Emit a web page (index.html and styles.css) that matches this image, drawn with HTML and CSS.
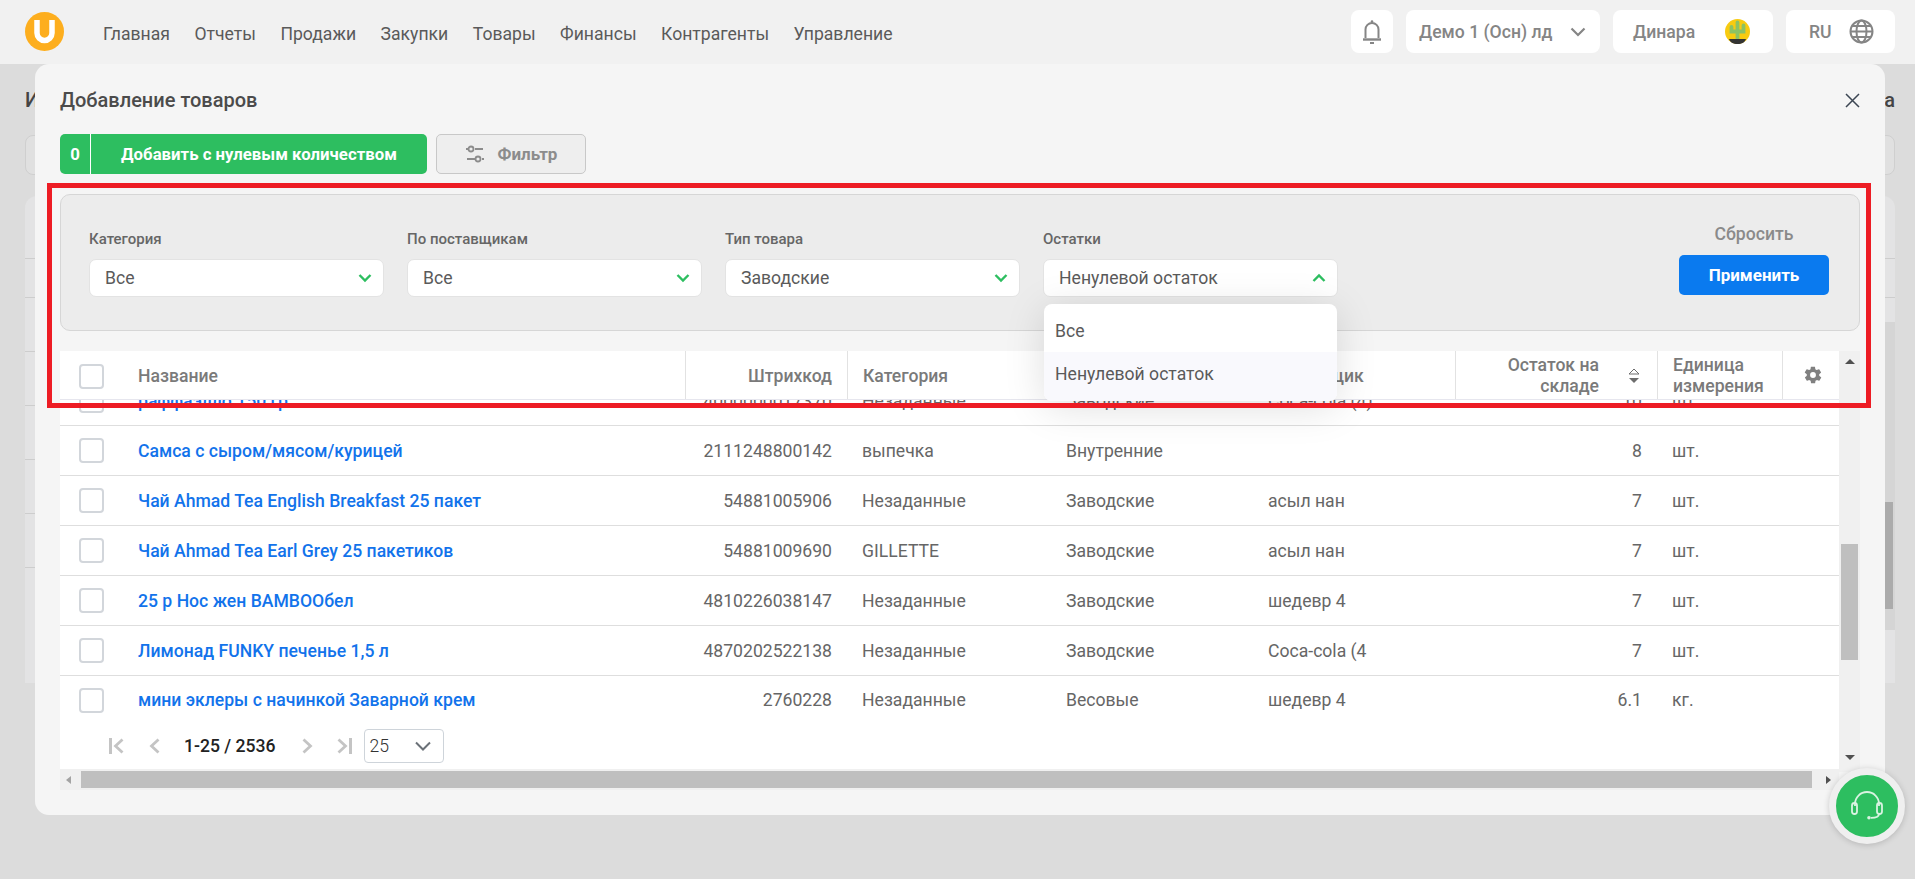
FILE: index.html
```html
<!DOCTYPE html>
<html lang="ru">
<head>
<meta charset="utf-8">
<title>Добавление товаров</title>
<link rel="stylesheet" href="styles.css">
</head>
<body>
<header class="topbar">
  <svg class="logo" viewBox="0 0 39 39"><circle cx="19.5" cy="19.5" r="19.5" fill="#fdae1e"/><path d="M12 8v13a7.500 7.500 0 0 0 15 0V8" fill="none" stroke="#fff" stroke-width="5.500"/></svg>
  <nav class="nav"><span>Главная</span><span>Отчеты</span><span>Продажи</span><span>Закупки</span><span>Товары</span><span>Финансы</span><span>Контрагенты</span><span>Управление</span></nav>
  <div class="widgets">
    <div class="widget bell"><svg width="20" height="26" viewBox="0 0 20 26" fill="none" stroke="#858585" stroke-width="2"><path d="M3.500 19V10.500a6.500 6.500 0 0 1 13 0V19"/><path d="M1 20.500h18" stroke-width="2.400"/><circle cx="10" cy="2.500" r="1.300" fill="#858585" stroke="none"/><path d="M8 24h4" stroke-width="2"/></svg></div>
    <div class="widget demo"><span>Демо 1 (Осн) лд</span><svg width="16" height="10" viewBox="0 0 16 10" fill="none" stroke="#858585" stroke-width="2.200"><path d="M1.500 1.500L8 8l6.500-6.500"/></svg></div>
    <div class="widget user"><span>Динара</span><svg width="25" height="25" viewBox="0 0 25 25"><circle cx="12.500" cy="12.500" r="12.500" fill="#f8cb10"/><path d="M12.500 3.500v16M6.500 8v4.500h5M18.500 6.500v6h-5" fill="none" stroke="#8dc263" stroke-width="3.800" stroke-linecap="round"/><path d="M4 20h17c-.8 3-4 5-8.500 5S4.800 23 4 20z" fill="#333"/></svg></div>
    <div class="widget lang"><span>RU</span><svg width="25" height="25" viewBox="0 0 25 25" fill="none" stroke="#858585" stroke-width="2"><circle cx="12.500" cy="12.500" r="11"/><ellipse cx="12.500" cy="12.500" rx="5" ry="11"/><path d="M1.500 12.500h22M3 7h19M3 18h19"/></svg></div>
  </div>
</header>

<main class="backdrop">
  <h1 class="back-title"><span>И</span><span>а</span></h1>
  <div class="back-filter"></div>
  <div class="back-card">
    <div class="back-line"></div><div class="back-line"></div><div class="back-line"></div><div class="back-line"></div><div class="back-line"></div><div class="back-line"></div><div class="back-line"></div>
  </div>
  <div class="back-scroll"><i class="back-thumb"></i></div>
</main>

<section class="modal">
  <div class="modal-head">
    <h2>Добавление товаров</h2>
    <svg class="close" width="15" height="15" viewBox="0 0 15 15" stroke="#3c4653" stroke-width="1.500"><path d="M1 1l13 13M14 1L1 14"/></svg>
  </div>
  <div class="actions">
    <button class="add"><span class="add-count">0</span><span class="add-label">Добавить с нулевым количеством</span></button>
    <button class="filter-btn"><svg width="20" height="20" viewBox="0 0 20 20" fill="none" stroke="#8c8c8c" stroke-width="1.800"><circle cx="6" cy="5" r="2.500"/><path d="M10 5h8M1 5h2"/><circle cx="13" cy="15" r="2.500"/><path d="M2 15h8M17 15h2"/></svg><span>Фильтр</span></button>
  </div>
  <div class="filters">
    <div class="field"><label>Категория</label><div class="select"><span>Все</span><svg class="chev" viewBox="0 0 14 10"><path d="M1.500 2L7 7.500 12.500 2"/></svg></div></div>
    <div class="field"><label>По поставщикам</label><div class="select"><span>Все</span><svg class="chev" viewBox="0 0 14 10"><path d="M1.500 2L7 7.500 12.500 2"/></svg></div></div>
    <div class="field"><label>Тип товара</label><div class="select"><span>Заводские</span><svg class="chev" viewBox="0 0 14 10"><path d="M1.500 2L7 7.500 12.500 2"/></svg></div></div>
    <div class="field open"><label>Остатки</label><div class="select"><span>Ненулевой остаток</span><svg class="chev" viewBox="0 0 14 10"><path d="M1.500 8L7 2.500 12.500 8"/></svg></div>
      <ul class="menu"><li>Все</li><li class="active">Ненулевой остаток</li></ul>
    </div>
    <div class="filter-actions"><span class="reset">Сбросить</span><button class="apply">Применить</button></div>
  </div>
  <div class="table-wrap">
    <div class="table-main">
      <div class="table-scroll">
        <div class="row head">
          <div class="cell check"><i class="box"></i></div>
          <div class="cell">Название</div>
          <div class="cell right line">Штрихкод</div>
          <div class="cell line">Категория</div>
          <div class="cell line">Тип товара</div>
          <div class="cell line">Поставщик</div>
          <div class="cell right line qty-head"><span>Остаток на<br>складе</span><svg class="sort" width="12" height="16" viewBox="0 0 12 16"><path d="M6 1l5 5H1z" fill="none" stroke="#6d6d6d"/><path d="M6 15l5-5H1z" fill="#6d6d6d"/></svg></div>
          <div class="cell line">Единица<br>измерения</div>
          <div class="cell line gear"><svg width="20" height="20" viewBox="0 0 24 24"><path fill="#808080" d="M19.400 13c.1-.3.100-.7.100-1s0-.7-.1-1l2.100-1.600c.2-.2.300-.4.100-.6l-2-3.500c-.1-.2-.4-.3-.6-.2l-2.500 1c-.5-.4-1.100-.7-1.700-1l-.4-2.600c0-.3-.2-.5-.5-.5h-4c-.3 0-.5.200-.5.500l-.4 2.600c-.6.300-1.200.6-1.700 1l-2.500-1c-.2-.1-.5 0-.6.200l-2 3.500c-.1.200-.1.400.1.600L4.600 11c-.1.300-.1.700-.1 1s0 .7.100 1l-2.100 1.600c-.2.200-.3.400-.1.600l2 3.500c.1.200.4.300.6.200l2.500-1c.5.400 1.100.7 1.700 1l.4 2.600c0 .3.200.5.500.5h4c.3 0 .5-.2.500-.5l.4-2.600c.6-.3 1.200-.6 1.700-1l2.500 1c.2.100.5 0 .6-.2l2-3.500c.1-.2.100-.4-.1-.6L19.400 13zM12 15.500a3.500 3.500 0 1 1 0-7 3.500 3.500 0 0 1 0 7z"/></svg></div>
        </div>
        <div class="rows">
          <div class="row first"><div class="cell check"><i class="box"></i></div><div class="cell link">раффаэлло 150 гр</div><div class="cell right">4000000017370</div><div class="cell">Незаданные</div><div class="cell">Заводские</div><div class="cell">Coca-cola (4)</div><div class="cell right">10</div><div class="cell">шт.</div></div>
          <div class="row"><div class="cell check"><i class="box"></i></div><div class="cell link">Самса с сыром/мясом/курицей</div><div class="cell right">2111248800142</div><div class="cell">выпечка</div><div class="cell">Внутренние</div><div class="cell"></div><div class="cell right">8</div><div class="cell">шт.</div></div>
          <div class="row"><div class="cell check"><i class="box"></i></div><div class="cell link">Чай Ahmad Tea English Breakfast 25 пакет</div><div class="cell right">54881005906</div><div class="cell">Незаданные</div><div class="cell">Заводские</div><div class="cell">асыл нан</div><div class="cell right">7</div><div class="cell">шт.</div></div>
          <div class="row"><div class="cell check"><i class="box"></i></div><div class="cell link">Чай Ahmad Tea Earl Grey 25 пакетиков</div><div class="cell right">54881009690</div><div class="cell">GILLETTE</div><div class="cell">Заводские</div><div class="cell">асыл нан</div><div class="cell right">7</div><div class="cell">шт.</div></div>
          <div class="row"><div class="cell check"><i class="box"></i></div><div class="cell link">25 р Нос жен BAMBOOбел</div><div class="cell right">4810226038147</div><div class="cell">Незаданные</div><div class="cell">Заводские</div><div class="cell">шедевр 4</div><div class="cell right">7</div><div class="cell">шт.</div></div>
          <div class="row"><div class="cell check"><i class="box"></i></div><div class="cell link">Лимонад FUNKY печенье 1,5 л</div><div class="cell right">4870202522138</div><div class="cell">Незаданные</div><div class="cell">Заводские</div><div class="cell">Coca-cola (4</div><div class="cell right">7</div><div class="cell">шт.</div></div>
          <div class="row last"><div class="cell check"><i class="box"></i></div><div class="cell link">мини эклеры с начинкой Заварной крем</div><div class="cell right">2760228</div><div class="cell">Незаданные</div><div class="cell">Весовые</div><div class="cell">шедевр 4</div><div class="cell right">6.1</div><div class="cell">кг.</div></div>
        </div>
        <div class="pager">
          <svg class="pg" width="15" height="16" viewBox="0 0 15 16"><path d="M1.500 0v16" stroke-width="3"/><path d="M13.500 1.500L6.500 8l7 6.500"/></svg>
          <svg class="pg" width="11" height="16" viewBox="0 0 11 16"><path d="M9.500 1.500L2.500 8l7 6.500"/></svg>
          <span class="pg-text">1-25 / 2536</span>
          <svg class="pg" width="11" height="16" viewBox="0 0 11 16"><path d="M1.500 1.500L8.500 8l-7 6.500"/></svg>
          <svg class="pg" width="15" height="16" viewBox="0 0 15 16"><path d="M13.500 0v16" stroke-width="3"/><path d="M1.500 1.500L8.500 8l-7 6.500"/></svg>
          <div class="pg-select"><span>25</span><svg width="16" height="10" viewBox="0 0 16 10" fill="none" stroke="#6b7178" stroke-width="2"><path d="M1 1.500l7 7 7-7"/></svg></div>
        </div>
      </div>
      <div class="hbar"><i class="arrow-l"></i><i class="hthumb"></i><i class="arrow-r"></i></div>
    </div>
    <div class="vbar"><i class="arrow-u"></i><i class="vthumb"></i><i class="arrow-d"></i></div>
  </div>
</section>

<div class="red-frame"></div>

<button class="help"><svg width="34" height="30" viewBox="0 0 34 30" fill="none" stroke="#d9f3e2" stroke-width="1.800"><path d="M5 15V13a12 12 0 0 1 24 0v2"/><rect x="2" y="12" width="5" height="11" rx="2.500"/><rect x="27" y="12" width="5" height="11" rx="2.500"/><path d="M29 23c0 2.500-3 3.800-8 3.800"/><circle cx="19" cy="26.800" r="1.800" fill="#d9f3e2" stroke="none"/></svg></button>
</body>
</html>
```
FILE: styles.css
```css
* { box-sizing: border-box; }
html, body { margin: 0; height: 879px; overflow: hidden; }
body { font-family: Roboto, "Noto Sans", sans-serif; font-size: 17.6px; color: #666; background: #dcdcdc; position: relative; }
button { font-family: inherit; cursor: pointer; }

.topbar { height: 65px; background: #f1f1f1; border-bottom: 1px solid #dcdcdc; display: flex; align-items: center; padding: 0 20px 0 25px; }
.logo { width: 39px; height: 39px; flex: none; margin-top: -1px; }
.nav { display: flex; gap: 24.500px; margin-left: 39px; color: #5a5a5a; padding-top: 4px; }
.widgets { margin-left: auto; display: flex; gap: 13px; margin-top: -1px; }
.widget { height: 43px; background: #fff; border-radius: 8px; display: flex; align-items: center; color: #858585; font-weight: 500; }
.bell { width: 42px; justify-content: center; }
.demo { width: 194px; padding: 0 14px 0 13px; justify-content: space-between; }
.user { width: 160px; padding: 0 23px 0 20px; justify-content: space-between; }
.lang { width: 109px; padding: 0 21px 0 23px; justify-content: space-between; }

.backdrop { padding: 0 20px 0 25px; height: 814px; position: relative; }
.back-title { margin: 0; height: 70px; padding-top: 24px; font-size: 20px; font-weight: 500; line-height: 22px; color: #444; display: flex; justify-content: space-between; }
.back-filter { height: 40px; margin-bottom: 21px; border: 1px solid #cfcfcf; border-radius: 8px; background: #e0e0e0; }
.back-card { height: 487px; background: #e3e3e4; border-radius: 12px 12px 0 0; padding-top: 62px; }
.back-line { height: 54px; border-top: 1px solid #cdcdcd; }
.back-line:first-child { height: 39px; }
.back-scroll { position: absolute; left: 1885px; top: 257px; width: 10px; height: 308px; background: #d5d5d5; }
.back-thumb { display: block; width: 8px; height: 107px; margin-top: 180px; background: #ababab; }

.modal { position: absolute; left: 35px; top: 64px; width: 1850px; height: 751px; background: #f5f5f5; border-radius: 14px; padding: 0 25px; display: flex; flex-direction: column; }
.modal-head { height: 70px; display: flex; align-items: center; justify-content: space-between; flex: none; margin-top: 1px; margin-bottom: -1px; }
.modal-head h2 { margin: 0; font-size: 20px; font-weight: 500; color: #4b4b4b; }
.actions { display: flex; gap: 9px; height: 40px; flex: none; }
.add { width: 367px; background: #2dbe60; border: 0; border-radius: 5px; color: #fff; font-weight: 700; font-size: 16.800px; display: flex; padding: 0; height: 40px; }
.add-count { width: 31px; line-height: 40px; border-right: 1px solid #fff; text-align: center; flex: none; }
.add-label { flex: 1; line-height: 40px; text-align: center; }
.filter-btn { width: 150px; height: 40px; background: #eee; border: 1px solid #c8c8c8; border-radius: 5px; color: #8c8c8c; font-weight: 700; font-size: 17px; display: flex; align-items: center; justify-content: center; gap: 13px; padding: 0; }

.filters { margin-top: 20px; height: 137px; flex: none; background: #ececec; border: 1px solid #d6d6d6; border-radius: 10px; display: flex; gap: 23px; padding: 0 30px 0 28px; }
.field { width: 295px; position: relative; flex: none; margin-top: 35px; }
.field label { display: block; font-size: 15px; font-weight: 500; color: #666; line-height: 18px; height: 29px; }
.select { height: 38px; background: #fff; border: 1px solid #e3e3e3; border-radius: 7px; display: flex; align-items: center; justify-content: space-between; padding: 0 11px 0 15px; color: #5a5a5a; }
.chev { width: 14px; height: 10px; fill: none; stroke: #2dbe60; stroke-width: 2.400; }
.menu { position: absolute; left: 1px; top: 74px; width: 293px; height: 97px; margin: 0; padding: 0; list-style: none; background: #fff; border-radius: 8px; box-shadow: 0 6px 40px rgba(0,0,0,.13); overflow: hidden; z-index: 3; color: #5a5a5a; }
.menu li { height: 48px; padding-left: 11px; line-height: 54px; }
.menu li.active { height: 49px; background: #f9f9fd; line-height: 44px; }
.filter-actions { margin-left: auto; width: 150px; display: flex; flex-direction: column; align-items: center; padding-top: 28px; }
.reset { color: #8a8a8a; line-height: 22px; font-weight: 500; }
.apply { margin-top: 10px; width: 150px; height: 40px; border: 0; border-radius: 5px; background: #0a7aef; color: #fff; font-weight: 700; font-size: 17px; }

.table-wrap { margin-top: 20px; display: flex; height: 439px; flex: none; }
.table-main { width: 1779px; display: flex; flex-direction: column; }
.table-scroll { height: 418px; background: #fff; display: flex; flex-direction: column; overflow: hidden; }
.row { display: grid; grid-template-columns: 78px 547px 162px 204px 202px 202px 202px 125px 57px; height: 50px; border-bottom: 1px solid #dedede; align-items: center; color: #666; flex: none; }
.row.last { border-bottom: 0; height: 48px; }
.row.first { margin-top: -24px; }
.rows { height: 325px; overflow: hidden; flex: none; }
.cell { padding: 0 15px; white-space: nowrap; }
.cell.check { padding: 0 0 0 19px; display: flex; }
.box { display: block; width: 25px; height: 25px; border: 2px solid #d2d6db; border-radius: 4px; background: #fff; }
.cell.link { color: #1273eb; font-weight: 500; padding-left: 0; }
.cell.right { text-align: right; }
.head { height: 49px; border-bottom: 1px solid #e6e6ee; font-weight: 500; color: #7a7a7a; line-height: 21px; position: relative; }
.head .cell { height: 100%; display: flex; align-items: center; padding-top: 2px; }
.head .cell:nth-child(2) { padding-left: 0; }
.head .cell.check { padding-left: 19px; }
.head .cell.right { justify-content: flex-end; }
.head .line { border-left: 1px solid #e2e2e2; }
.head .qty-head { padding-right: 17px; gap: 29px; padding-left: 0; text-align: right; }
.head .gear { justify-content: center; padding: 0 0 0 3px; }
.sort { flex: none; }
.pager { display: flex; align-items: center; padding-left: 49px; height: 44px; flex: none; margin-top: -1px; }
.pg { fill: none; stroke: #c4c4c4; stroke-width: 2.800; flex: none; }
.pager > .pg:nth-child(2) { margin-left: 25px; }
.pg-text { margin: 0 26px 0 24px; font-weight: 500; color: #222; }
.pager > .pg:nth-child(5) { margin-left: 24px; margin-right: 12px; }
.pg-select { width: 80px; height: 34px; border: 1px solid #ced4da; border-radius: 4px; display: flex; align-items: center; justify-content: space-between; padding: 0 12px 0 5px; color: #333; font-weight: 300; }
.hbar { height: 21px; background: #f0f0f0; display: flex; align-items: center; flex: none; }
.hthumb { width: 1731px; height: 17px; background: #bfbfbf; margin-right: 14px; flex: none; }
.arrow-l { width: 0; height: 0; border: 4px solid transparent; border-right: 5px solid #a3a3a3; border-left: 0; margin: 0 10px 0 6px; flex: none; }
.arrow-r { width: 0; height: 0; border: 4px solid transparent; border-left: 5px solid #505050; border-right: 0; flex: none; }
.vbar { width: 21px; background: #f0f0f0; display: flex; flex-direction: column; align-items: center; padding-top: 8px; height: 421px; }
.arrow-u { width: 0; height: 0; border: 5px solid transparent; border-bottom: 5px solid #505050; border-top: 0; flex: none; }
.arrow-d { width: 0; height: 0; border: 5px solid transparent; border-top: 5px solid #505050; border-bottom: 0; flex: none; margin-top: 95px; }
.vthumb { width: 17px; height: 116px; margin-top: 180px; background: #bfbfbf; flex: none; }

.red-frame { position: absolute; left: 47px; top: 183px; width: 1824px; height: 225px; border: 5px solid #ed1c24; pointer-events: none; z-index: 5; }
.help { position: absolute; left: 1829px; top: 768px; width: 76px; height: 76px; border-radius: 50%; border: 7px solid #efefef; background: #2dbe60; padding: 0; display: flex; align-items: center; justify-content: center; box-shadow: 0 1px 6px rgba(0,0,0,.18); z-index: 6; }
```
